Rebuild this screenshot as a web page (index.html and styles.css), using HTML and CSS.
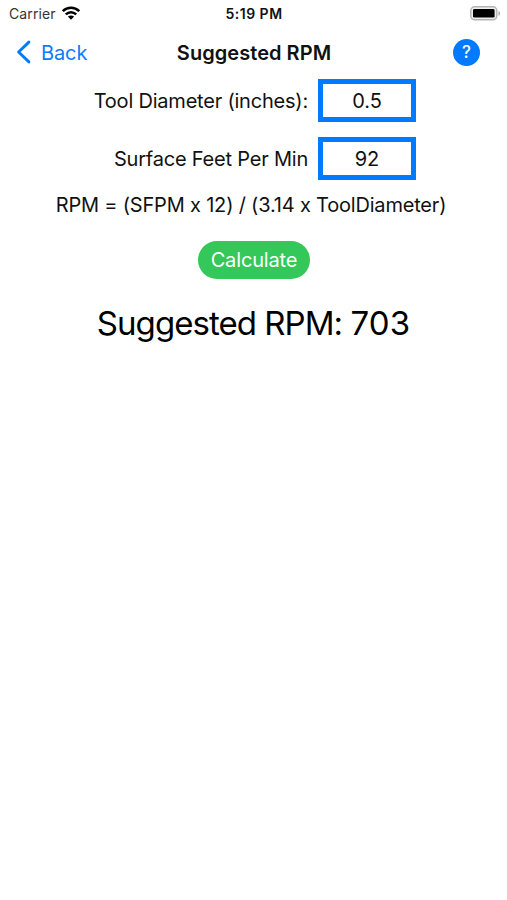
FILE: index.html
```html
<!DOCTYPE html>
<html lang="en">
<head>
<meta charset="utf-8">
<title>Suggested RPM</title>
<link rel="stylesheet" href="styles.css">
</head>
<body>
<header class="status">
  <div class="carrier"><span class="carrier-name">Carrier</span>
    <svg class="wifi" viewBox="0 0 18 14" aria-hidden="true"><g fill="none" stroke="#000" stroke-width="2.5"><path d="M.8 5.2C5.4.7 12.6.7 17.2 5.2"/><path d="M3.8 8.4C6.8 5.5 11.2 5.5 14.2 8.4"/></g><path d="M9 13.7 5.9 10.6C7.6 9 10.4 9 12.1 10.6Z"/></svg>
  </div>
  <span class="time">5:19 PM</span>
  <svg class="battery" viewBox="0 0 31 15" aria-hidden="true"><rect x=".8" y=".8" width="26" height="13" rx="3.8" fill="#eee" stroke="#b5b5b5" stroke-width="1.5"/><rect x="3" y="3" width="21.6" height="8.6" rx="1.4"/><path d="M28.5 5v4.8c2.2-.8 2.2-4 0-4.8" fill="#aaa"/></svg>
</header>
<nav class="nav">
  <a class="back"><svg class="chevron" viewBox="0 0 15 24" aria-hidden="true"><path d="M12.9 2.1 2.6 12l10.3 9.9" fill="none" stroke="#007aff" stroke-width="2.9" stroke-linecap="round" stroke-linejoin="round"/></svg><span class="back-text">Back</span></a>
  <h1 class="title"><span>Suggested RPM</span></h1>
  <button class="help">?</button>
</nav>
<main class="form">
  <label class="row"><span class="label diameter">Tool Diameter (inches):</span><input class="field" value="0.5"></label>
  <label class="row"><span class="label surface">Surface Feet Per Min</span><input class="field" value="92"></label>
  <p class="formula"><span>RPM = (SFPM x 12) / (3.14 x ToolDiameter)</span></p>
  <button class="calculate">Calculate</button>
  <p class="result">Suggested RPM: <span class="value">703</span></p>
</main>
</body>
</html>
```
FILE: styles.css
```css
* { box-sizing: border-box; }
body {
  margin: 0;
  height: 900px;
  overflow: hidden;
  background: #fff;
  color: #111;
  font: 20px/26px Inter, "Liberation Sans", sans-serif;
}
h1, p { margin: 0; font-size: inherit; }
button, input { font: inherit; border: 0; padding: 0; }
span { white-space: nowrap; }
.status {
  display: grid;
  grid-template-columns: 216px 76px 1fr;
  height: 27px;
  align-items: center;
}
.carrier { display: flex; align-items: center; gap: 6px; padding-left: 9px; }
.carrier-name { font-size: 14px; width: 47px; letter-spacing: .1px; color: #333; }
.wifi { width: 18px; height: 14px; margin-bottom: 2px; }
.time { font-size: 14px; font-weight: 600; text-align: center; letter-spacing: .5px; }
.battery { width: 31px; height: 15px; justify-self: end; margin-right: 6px; }
.nav {
  display: grid;
  grid-template-columns: 154px 200px 1fr;
  height: 50px;
  align-items: center;
}
.back { display: flex; align-items: center; gap: 10px; padding-left: 16px; color: #0a7cff; }
.back-text { padding-top: 1px; letter-spacing: -.1px; }
.chevron { width: 15px; height: 24px; }
.title { font-weight: 600; text-align: center; padding-top: 1px; letter-spacing: .05px; }
.help {
  width: 27px;
  height: 27px;
  border-radius: 50%;
  background: #007aff;
  color: #fff;
  font-size: 17px;
  font-weight: 500;
  line-height: 27px;
  justify-self: end;
  margin-right: 27px;
}
.form { display: flex; flex-direction: column; align-items: center; padding-top: 2px; }
.row { display: flex; width: 507px; height: 43px; align-items: center; gap: 10px; margin-bottom: 15px; }
.label { width: 308px; text-align: right; letter-spacing: -.21px; }
.field {
  width: 98px;
  height: 43px;
  border: 5px solid #007aff;
  background: #fff;
  color: #111;
  text-align: center;
}
.formula { margin: -3px 5px 0 0; letter-spacing: -.19px; }
.calculate {
  width: 112px;
  height: 38px;
  margin: 23px 0 0 1px;
  border-radius: 19px;
  background: #34c759;
  color: #fff;
  letter-spacing: -.15px;
}
.result { margin-top: 23px; font-size: 33px; line-height: 42px; letter-spacing: -.95px; color: #000; }
.value { letter-spacing: .1px; }
```
